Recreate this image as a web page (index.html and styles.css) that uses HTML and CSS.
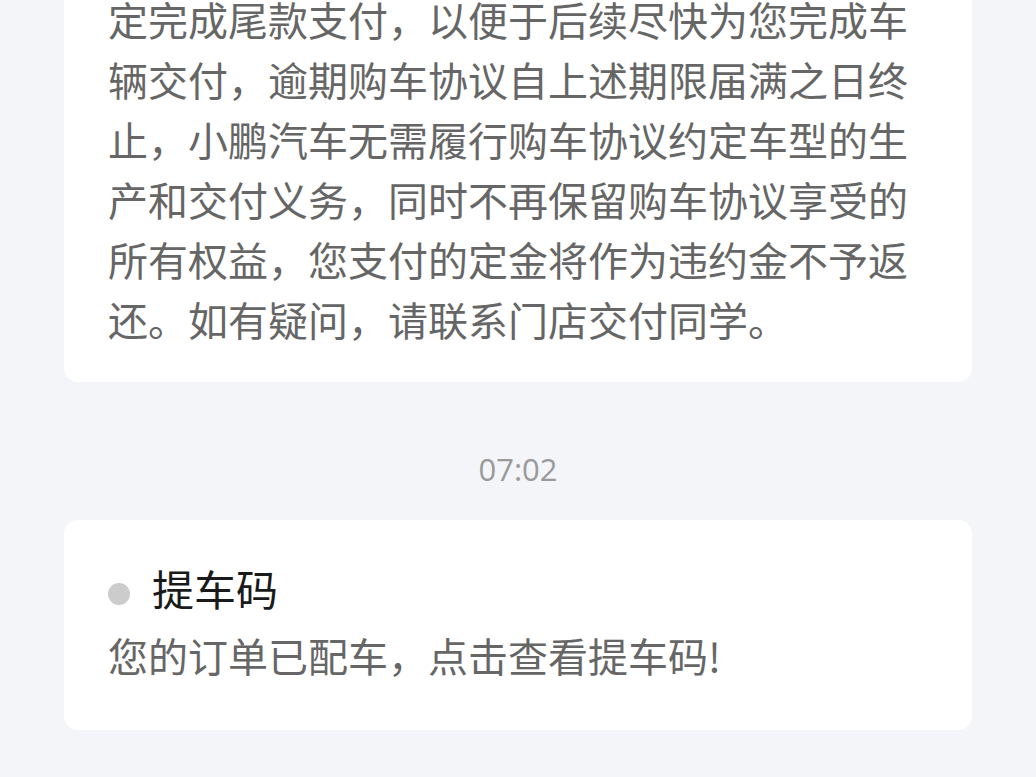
FILE: index.html
```html
<!DOCTYPE html>
<html lang="zh-CN">
<head>
<meta charset="utf-8">
<title>消息</title>
<link rel="stylesheet" href="styles.css">
</head>
<body>
<div class="page">
  <div class="card card-top">
    <p class="body-text">定完成尾款支付，以便于后续尽快为您完成车辆交付，逾期购车协议自上述期限届满之日终止，小鹏汽车无需履行购车协议约定车型的生产和交付义务，同时不再保留购车协议享受的所有权益，您支付的定金将作为违约金不予返还。如有疑问，请联系门店交付同学。</p>
  </div>
  <div class="time">07:02</div>
  <div class="card card-msg">
    <div class="title-row">
      <span class="dot"></span>
      <span class="title">提车码</span>
    </div>
    <p class="body-text">您的订单已配车，点击查看提车码!</p>
  </div>
</div>
</body>
</html>
```
FILE: styles.css
```css
html, body {
  margin: 0;
  padding: 0;
  background: #f4f5f9;
}
body {
  font-family: "Noto Sans CJK SC", "Noto Sans", sans-serif;
}
.page {
  display: flex;
  flex-direction: column;
  padding: 0 64px;
  margin-top: -11px;
}
.card {
  background: #ffffff;
  border-radius: 14px;
  padding: 0 44px;
}
.card-top {
  border-top-left-radius: 0;
  border-top-right-radius: 0;
  padding-bottom: 33px;
}
.body-text {
  margin: 0;
  font-size: 40px;
  line-height: 60px;
  color: #666666;
}
.time {
  text-align: center;
  font-family: "Open Sans", "Noto Sans", sans-serif;
  font-size: 31px;
  line-height: 40px;
  color: #9a9a9a;
  padding: 67px 0 31px;
}
.card-msg {
  padding-top: 38px;
  padding-bottom: 45px;
}
.title-row {
  display: flex;
  align-items: center;
  gap: 22px;
  margin-bottom: 7px;
}
.dot {
  width: 22px;
  height: 22px;
  border-radius: 50%;
  background: #cccccc;
  margin-top: 12px;
}
.title {
  font-size: 42px;
  line-height: 60px;
  color: #1a1a1a;
}
```
